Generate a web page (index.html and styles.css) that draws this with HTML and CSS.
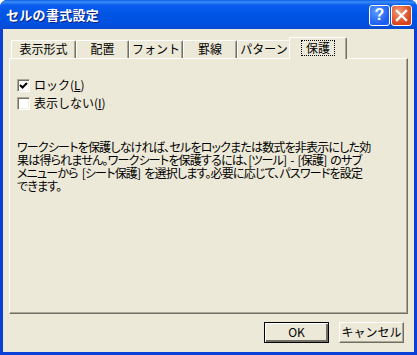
FILE: index.html
```html
<!DOCTYPE html>
<html lang="ja">
<head>
    <meta charset="UTF-8">
    <title>セルの書式設定</title>
    <link rel="stylesheet" href="styles.css">
</head>
<body>
<div class="window">
    <div class="titlebar">
        <span class="title">セルの書式設定</span>
        <div class="caption">
            <span class="cap help">?</span>
            <span class="cap close">
                <svg width="13" height="13" viewBox="0 0 13 13"><path d="M2 2 L11 11 M11 2 L2 11" stroke="#fff" stroke-width="2.4" stroke-linecap="square"/></svg>
            </span>
        </div>
    </div>
    <div class="client">
        <div class="tabs">
            <span class="tab wide">表示形式</span>
            <span class="tab narrow">配置</span>
            <span class="tab">フォント</span>
            <span class="tab">罫線</span>
            <span class="tab">パターン</span>
            <span class="tab active"><span class="focus">保護</span></span>
        </div>
        <div class="panel">
            <div class="check">
                <span class="box"><svg width="11" height="11" viewBox="0 0 11 11"><path d="M2 5 L4.5 7.5 L9 3" fill="none" stroke="#000" stroke-width="2"/></svg></span>
                <span>ロック(<u>L</u>)</span>
            </div>
            <div class="check">
                <span class="box"></span>
                <span>表示しない(<u>I</u>)</span>
            </div>
            <p class="note">ワークシートを保護しなければ、セルをロックまたは数式を非表示にした効<br>果は得られません。ワークシートを保護するには、[ツール] - [保護] のサブ<br>メニューから [シート保護] を選択します。必要に応じて、パスワードを設定<br>できます。</p>
        </div>
        <div class="buttons">
            <span class="btn default">OK</span>
            <span class="btn">キャンセル</span>
        </div>
    </div>
</div>
</body>
</html>
```

FILE: styles.css
```css
@charset "UTF-8";
body,p{margin:0;padding:0}
body{font:12px/1.2 "Noto Sans CJK JP", "DejaVu Sans", sans-serif;color:#000;background:#fff;}

.window{
    width:417px;
    height:355px;
    box-sizing:border-box;
    display:flex;
    flex-direction:column;
    background:#0a3fd8;
    padding:0 3px 3px 3px;
    border-radius:7px 7px 0 0;
}
.titlebar{
    height:29px;
    margin:0 -3px;
    padding:0 5px 0 6px;
    display:flex;
    align-items:center;
    justify-content:space-between;
    background:linear-gradient(#0a5fe8 0, #3d8df5 2px, #0b5ef0 5px, #0055e5 14px, #0050e0 24px, #0a4ad0 29px);
    border-radius:7px 7px 0 0;
}
.title{
    color:#fff;
    font-weight:bold;
    font-size:13px;
    letter-spacing:0.3px;
    text-shadow:1px 1px 0 #0a1e80;
    margin-top:1px;
}
.caption{
    display:flex;
    gap:1px;
    margin-top:1px;
}
.cap{
    width:21px;
    height:21px;
    box-sizing:border-box;
    border:1px solid #fff;
    border-radius:3px;
    display:flex;
    align-items:center;
    justify-content:center;
}
.help{
    background:radial-gradient(circle at 35% 30%, #5b9bff, #1c5ef0 70%);
    color:#fff;
    font:bold 16px/1 "Liberation Sans", sans-serif;
}
.close{
    background:radial-gradient(circle at 35% 30%, #f29a75, #d9431c 70%);
}

.client{
    flex:1;
    background:#ece9d8;
    padding:8px 6px 0 6px;
    display:flex;
    flex-direction:column;
}
.tabs{
    display:flex;
    align-items:flex-end;
    padding-left:2px;
    height:21px;
    position:relative;
    z-index:1;
}
.tab{
    width:54px;
    flex:none;
    height:18px;
    box-sizing:border-box;
    display:flex;
    align-items:center;
    justify-content:center;
    border-top:1px solid #fff;
    border-left:1px solid #fff;
    border-right:1px solid #716f64;
    box-shadow:inset -1px 0 0 #aca899;
    border-radius:2px 2px 0 0;
}
.tab.wide{width:65px;}
.tab.narrow{width:53px;}
.tab.active{
    height:22px;
    width:58px;
    margin:0 0 -1px -2px;
    background:#ece9d8;
    padding-bottom:2px;
}
.focus{
    outline:1px dotted #000;
    outline-offset:0;
    padding:0 4px;
    line-height:14px;
}

.panel{
    height:256px;
    box-sizing:border-box;
    border-top:1px solid #fff;
    border-left:1px solid #fff;
    border-right:1px solid #716f64;
    border-bottom:1px solid #716f64;
    box-shadow:inset -1px -1px 0 #aca899;
    padding:17px 7px 0 7px;
}
.check{
    height:18px;
    display:flex;
    align-items:center;
    gap:4px;
}
.box{
    width:13px;
    height:13px;
    box-sizing:border-box;
    background:#fff;
    border-top:1px solid #aca899;
    border-left:1px solid #aca899;
    border-right:1px solid #fff;
    border-bottom:1px solid #fff;
    box-shadow:inset 1px 1px 0 #716f64, inset -1px -1px 0 #f1efe2;
    display:flex;
    align-items:center;
    justify-content:center;
}
.check u{text-decoration:underline;text-underline-offset:1px;}
.note{
    margin-top:28px;
    line-height:13px;
    font-size:12px;
    letter-spacing:-0.8px;
    word-spacing:2px;
    font-feature-settings:"palt";
    white-space:nowrap;
}

.buttons{
    display:flex;
    justify-content:flex-end;
    gap:10px;
    margin-top:8px;
    padding-right:4px;
}
.btn{
    width:65px;
    height:21px;
    box-sizing:border-box;
    display:flex;
    align-items:center;
    justify-content:center;
    border-top:1px solid #fff;
    border-left:1px solid #fff;
    border-right:1px solid #716f64;
    border-bottom:1px solid #716f64;
    box-shadow:inset -1px -1px 0 #aca899;
}
.btn.default{
    border:1px solid #000;
    box-shadow:inset 1px 1px 0 #fff, inset -2px -2px 0 #716f64, inset -1px -1px 0 #aca899;
}
```
